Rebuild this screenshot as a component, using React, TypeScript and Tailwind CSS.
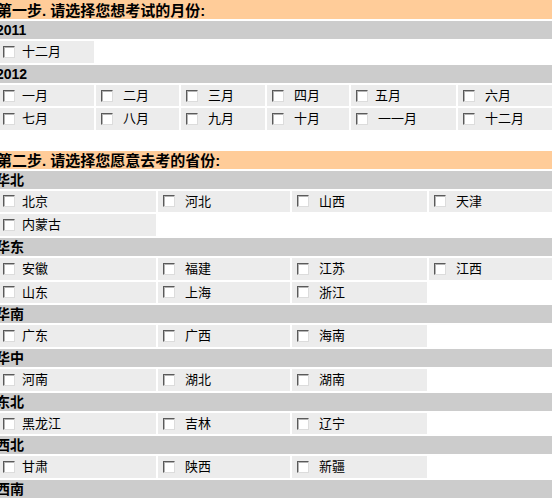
import React from 'react';

type Item = { label: string; spaced?: boolean };

const FONT = { fontFamily: '"Liberation Sans", "Noto Sans CJK SC", sans-serif' };

const months2012: Item[][] = [
  [
    { label: '一月' },
    { label: '二月', spaced: true },
    { label: '三月', spaced: true },
    { label: '四月', spaced: true },
    { label: '五月' },
    { label: '六月', spaced: true },
  ],
  [
    { label: '七月' },
    { label: '八月', spaced: true },
    { label: '九月', spaced: true },
    { label: '十月', spaced: true },
    { label: '一一月', spaced: true },
    { label: '十二月', spaced: true },
  ],
];

const regions: { name: string; rows: Item[][] }[] = [
  {
    name: '华北',
    rows: [
      [{ label: '北京' }, { label: '河北', spaced: true }, { label: '山西', spaced: true }, { label: '天津', spaced: true }],
      [{ label: '内蒙古' }],
    ],
  },
  {
    name: '华东',
    rows: [
      [{ label: '安徽' }, { label: '福建', spaced: true }, { label: '江苏', spaced: true }, { label: '江西', spaced: true }],
      [{ label: '山东' }, { label: '上海', spaced: true }, { label: '浙江', spaced: true }],
    ],
  },
  {
    name: '华南',
    rows: [[{ label: '广东' }, { label: '广西', spaced: true }, { label: '海南', spaced: true }]],
  },
  {
    name: '华中',
    rows: [[{ label: '河南' }, { label: '湖北', spaced: true }, { label: '湖南', spaced: true }]],
  },
  {
    name: '东北',
    rows: [[{ label: '黑龙江' }, { label: '吉林', spaced: true }, { label: '辽宁', spaced: true }]],
  },
  {
    name: '西北',
    rows: [[{ label: '甘肃' }, { label: '陕西', spaced: true }, { label: '新疆', spaced: true }]],
  },
];

function Box() {
  return (
    <span className="inline-block w-[12px] h-[12px] shrink-0 bg-white border border-t-[#5a5a5a] border-l-[#5a5a5a] border-b-[#dcdcdc] border-r-[#dcdcdc] shadow-[inset_1px_1px_0_#b4b4b4]" />
  );
}

function Cell({ item }: { item: Item }) {
  return (
    <div className="flex items-center h-[21.7px] bg-[#ececec] pl-[5px] text-[13px] text-black">
      <Box />
      <span className={item.spaced ? 'ml-[10px]' : 'ml-[7px]'}>{item.label}</span>
    </div>
  );
}

function StepBar({ text, h }: { text: string; h: string }) {
  return (
    <div className={`flex items-end ${h} bg-[#ffcc99] text-[15px] font-bold leading-none pb-[1px] text-black`}>
      <span className="-ml-[1px]">{text}</span>
    </div>
  );
}

function GroupBar({ text }: { text: string }) {
  return (
    <div className="flex items-center h-[18px] bg-[#cccccc] text-[14px] font-bold leading-none text-black">
      <span className="-ml-[2px]">{text}</span>
    </div>
  );
}

export default function App() {
  const monthCols = 'grid grid-cols-[96px_83px_84px_82px_105px_94px] gap-[2px]';
  const provCols = 'grid grid-cols-[158px_132px_135px_123px] gap-[2px]';

  return (
    <div className="w-[554px] h-[498px] overflow-hidden bg-white" style={FONT}>
      <div className="-ml-[2px] w-[554px] flex flex-col gap-[2px]">
        {/* 第一步 */}
        <StepBar text="第一步. 请选择您想考试的月份:" h="h-[19px]" />
        <GroupBar text="2011" />
        <div className={monthCols}>
          <Cell item={{ label: '十二月' }} />
        </div>
        <GroupBar text="2012" />
        {months2012.map((row, i) => (
          <div key={i} className={monthCols}>
            {row.map((m) => (
              <Cell key={m.label} item={m} />
            ))}
          </div>
        ))}

        <div className="h-[16.5px]" />

        {/* 第二步 */}
        <StepBar text="第二步. 请选择您愿意去考的省份:" h="h-[18px]" />
        {regions.map((r) => (
          <React.Fragment key={r.name}>
            <GroupBar text={r.name} />
            {r.rows.map((row, i) => (
              <div key={i} className={provCols}>
                {row.map((p) => (
                  <Cell key={p.label} item={p} />
                ))}
              </div>
            ))}
          </React.Fragment>
        ))}
        <GroupBar text="西南" />
        <div className="h-[22px] bg-[#f5f8fc]" />
      </div>
    </div>
  );
}
